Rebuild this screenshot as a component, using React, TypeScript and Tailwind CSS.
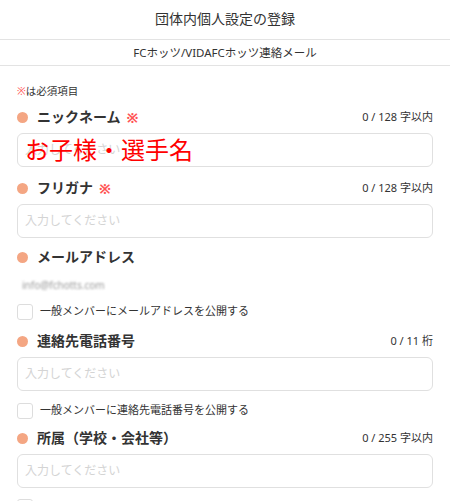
import React from "react";

const font = { fontFamily: '"Noto Sans", "Noto Sans CJK JP", sans-serif' };

function Label({ text, req, counter }: { text: string; req?: boolean; counter?: string }) {
  return (
    <div className="flex h-[20px] items-center justify-between">
      <div className="flex items-center">
        <span className="h-[11px] w-[11px] rounded-full bg-[#f4a683]" />
        <span className="ml-[9px] text-[14px] font-bold leading-[20px] text-[#333]">{text}</span>
        {req && <span className="ml-[6px] text-[14px] font-bold text-[#f55]">※</span>}
      </div>
      {counter && <span className="text-[11px] text-[#333]">{counter}</span>}
    </div>
  );
}

function Input({ overlay }: { overlay?: string }) {
  return (
    <div className="relative mt-[6px] flex h-[34px] items-center rounded-[6px] border-[1.5px] border-[#e0e0e0] bg-white px-[7px]">
      <span className="text-[12px] text-[#d4d4d4]">入力してください</span>
      {overlay && (
        <span className="absolute left-[7px] top-1/2 -translate-y-1/2 text-[24px] leading-none text-[#ff0000]">
          {overlay}
        </span>
      )}
    </div>
  );
}

function Check({ text }: { text: string }) {
  return (
    <div className="flex h-[17px] items-center">
      <span className="h-[16px] w-[16px] rounded-[3px] border border-[#ddd] bg-white" />
      <span className="ml-[7px] text-[11px] text-[#333]">{text}</span>
    </div>
  );
}

export default function App() {
  return (
    <div className="h-[501px] w-[450px] overflow-hidden bg-white" style={font}>
      <div className="flex h-[40px] items-center justify-center border-b border-[#e3e3e3] pb-[3px] text-[14px] text-[#333]">
        団体内個人設定の登録
      </div>
      <div className="flex h-[26px] items-center justify-center border-b border-[#e3e3e3] text-[11.5px] text-[#333]">
        FCホッツ/VIDAFCホッツ連絡メール
      </div>
      <div className="px-[17px] pt-[19px]">
        <div className="flex h-[14px] items-center text-[10.5px] text-[#333]">
          <span className="text-[#f55]">※</span>は必須項目
        </div>
        <div className="mt-[8px]">
          <Label text="ニックネーム" req counter="0 / 128 字以内" />
          <Input overlay="お子様・選手名" />
        </div>
        <div className="mt-[11px]">
          <Label text="フリガナ" req counter="0 / 128 字以内" />
          <Input />
        </div>
        <div className="mt-[9px]">
          <Label text="メールアドレス" />
          <div className="ml-[5px] mt-[11px] h-[14px] text-[10px] leading-[14px] text-[#999] blur-[1px]">info@fchotts.com</div>
          <div className="mt-[11px]">
            <Check text="一般メンバーにメールアドレスを公開する" />
          </div>
        </div>
        <div className="mt-[11px]">
          <Label text="連絡先電話番号" counter="0 / 11 桁" />
          <Input />
          <div className="mt-[11px]">
            <Check text="一般メンバーに連絡先電話番号を公開する" />
          </div>
        </div>
        <div className="mt-[9px]">
          <Label text="所属（学校・会社等）" counter="0 / 255 字以内" />
          <Input />
          <div className="mt-[10px]">
            <Check text="" />
          </div>
        </div>
      </div>
    </div>
  );
}
